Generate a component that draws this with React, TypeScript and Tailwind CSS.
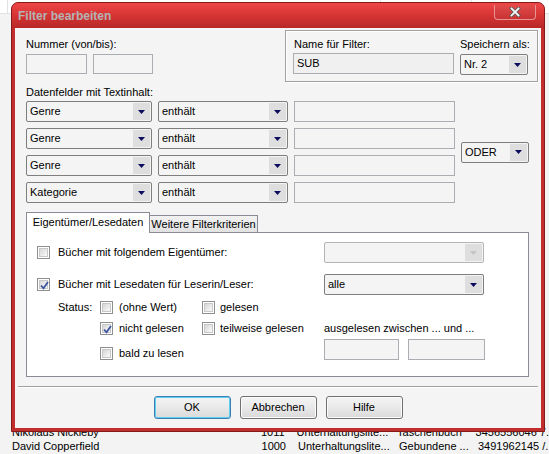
import React from "react";

const font = { fontFamily: '"Liberation Sans", Arial, sans-serif' };

function Arrow({ disabled = false }: { disabled?: boolean }) {
  return (
    <svg width="7" height="4" viewBox="0 0 7 4">
      <polygon points="0,0 7,0 3.5,4" fill={disabled ? "#c4c4c4" : "#0c0c5e"} />
    </svg>
  );
}

function Select({ value, w, disabled = false }: { value: string; w: string; disabled?: boolean }) {
  return (
    <div
      className={`${w} h-[21px] flex items-center rounded-[2px] border ${
        disabled ? "border-[#b4b4b4] bg-[#f4f4f4]" : "border-[#7e7e7e] bg-[#f4f4f4]"
      } pl-[3px] pr-[1px]`}
    >
      <span className="flex-1 truncate leading-[13px]">{value}</span>
      <div className="w-[17px] h-[17px] flex items-center justify-center bg-[#dedede]">
        <Arrow disabled={disabled} />
      </div>
    </div>
  );
}

function Input({ w, value = "", h = "h-[20px]", bg = "bg-[#f4f4f4]" }: { w: string; value?: string; h?: string; bg?: string }) {
  return (
    <div className={`${w} ${h} ${bg} border border-[#abadb3] flex items-center pl-[3px] leading-[13px]`}>
      {value}
    </div>
  );
}

function Checkbox({ checked = false }: { checked?: boolean }) {
  return (
    <div className="w-[13px] h-[13px] shrink-0 border border-[#8e8f8f] bg-white p-[1px]">
      <div className="w-full h-full bg-gradient-to-br from-[#d6d6d6] to-[#fafafa] border border-[#c8c8c8] relative">
        {checked && (
          <svg className="absolute left-[-1px] top-[-1px]" width="11" height="11" viewBox="0 0 11 11">
            <path d="M2 5.5 L4.5 8.3 L9 2" fill="none" stroke="#3d55a0" strokeWidth="1.8" />
          </svg>
        )}
      </div>
    </div>
  );
}

function Check({ label, checked = false, gap = "gap-[6px]" }: { label: string; checked?: boolean; gap?: string }) {
  return (
    <div className={`flex items-center ${gap}`}>
      <Checkbox checked={checked} />
      <span className="leading-[13px]">{label}</span>
    </div>
  );
}

function Button({ label, focused = false }: { label: string; focused?: boolean }) {
  return (
    <div
      className={`h-[23px] w-[77px] rounded-[3px] border flex items-center justify-center leading-[13px] bg-gradient-to-b from-[#f4f4f4] via-[#e9e9e9] to-[#d9d9d9] ${
        focused ? "border-[#3c7fb1] shadow-[inset_0_0_0_1px_#5fd0f4]" : "border-[#707070] shadow-[inset_0_0_0_1px_#fbfbfb]"
      }`}
    >
      {label}
    </div>
  );
}

function Background() {
  return (
    <div className="absolute inset-0 flex flex-col bg-[#f3f3f3] text-[11px] text-black" style={font}>
      <div className="h-[14px] bg-white border-b border-[#e2e2e2] flex">
        <div className="w-[8px] border-r border-[#e2e2e2]" />
        <div className="w-[373px] border-r border-[#e2e2e2]" />
        <div className="w-[91px] border-r border-[#e2e2e2]" />
      </div>
      <div className="flex-1" />
      <div className="flex flex-col pb-[1px]">
        {[
          ["Nikolaus Nickleby", "1011", "Unterhaltungslite...", "Taschenbuch", "3456556046 7."],
          ["David Copperfield", "1000", "Unterhaltungslite...", "Gebundene ...", "3491962145 /."],
        ].map((r) => (
          <div key={r[0]} className="h-[14px] flex items-center whitespace-nowrap">
            <span className="pl-[12px] w-[250px]">{r[0]}</span>
            <span className="w-[36px] text-right">{r[1]}</span>
            <span className="pl-[12px] w-[113px]">{r[2]}</span>
            <span className="w-[79px]">{r[3]}</span>
            <span>{r[4]}</span>
          </div>
        ))}
      </div>
    </div>
  );
}

export default function App() {
  return (
    <div className="relative w-[549px] h-[454px] overflow-hidden text-[11px] text-black" style={font}>
      <Background />

      {/* dialog window */}
      <div className="absolute left-[11px] top-[2px] w-[534px] h-[430px] flex flex-col rounded-t-[7px] border border-[#861a1a] bg-[#c22e2e]">
        <div className="h-[25px] shrink-0 flex items-start rounded-t-[6px] bg-gradient-to-b from-[#ee4646] via-[#d63434] to-[#b82727] pl-[6px]">
          <span className="mt-[6px] text-[12px] font-bold text-[#b4b4b4] leading-[14px]">Filter bearbeiten</span>
          <div className="ml-auto mr-[8px] mt-[2px] w-[42px] h-[15px] rounded-b-[4px] border border-t-0 border-[#e89494] bg-gradient-to-b from-[#e24a4a] to-[#c93232] flex items-center justify-center">
            <svg width="12" height="10" viewBox="0 0 12 10">
              <path d="M2.5 1.5 L9.5 8.5 M9.5 1.5 L2.5 8.5" stroke="#5a5a5a" strokeWidth="3.4" strokeLinecap="square" />
              <path d="M2.5 1.5 L9.5 8.5 M9.5 1.5 L2.5 8.5" stroke="#f4f4f4" strokeWidth="1.8" strokeLinecap="square" />
            </svg>
          </div>
        </div>

        {/* client */}
        <div className="flex-1 mx-[3px] mb-[3px] bg-[#f4f4f4] flex flex-col">
          <div className="flex">
            <div className="pl-[11px] pt-[10px] flex flex-col">
              <span className="leading-[13px]">Nummer (von/bis):</span>
              <div className="flex gap-[6px] mt-[3px]">
                <Input w="w-[61px]" />
                <Input w="w-[60px]" />
              </div>
            </div>
            <div className="ml-auto mr-[3px] mt-[2px] w-[253px] h-[52px] border border-[#a0a0a0] shadow-[inset_1px_1px_0_#ffffff,1px_1px_0_#ffffff] flex gap-[6px] pl-[7px] pt-[7px]">
              <div className="flex flex-col">
                <span className="leading-[13px] pl-[1px]">Name für Filter:</span>
                <div className="mt-[2px]">
                  <Input w="w-[161px]" h="h-[21px]" bg="bg-[#f0f0f0]" value="SUB" />
                </div>
              </div>
              <div className="flex flex-col">
                <span className="leading-[13px]">Speichern als:</span>
                <div className="mt-[3px]">
                  <Select w="w-[68px]" value="Nr. 2" />
                </div>
              </div>
            </div>
          </div>

          <span className="mt-[4px] pl-[11px] leading-[13px]">Datenfelder mit Textinhalt:</span>

          <div className="mt-[2px] pl-[11px] flex items-center">
            <div className="flex flex-col gap-[6px]">
              {["Genre", "Genre", "Genre", "Kategorie"].map((f, i) => (
                <div key={i} className="flex gap-[6px]">
                  <Select w="w-[126px]" value={f} />
                  <Select w="w-[130px]" value="enthält" />
                  <Input w="w-[161px]" h="h-[21px]" />
                </div>
              ))}
            </div>
            <div className="ml-[6px]">
              <Select w="w-[68px]" value="ODER" />
            </div>
          </div>

          {/* tabs */}
          <div className="mt-[9px] pl-[11px] flex items-end">
            <div className="relative z-10 w-[124px] h-[21px] -mb-[1px] bg-white border border-b-0 border-[#898c95] flex items-center justify-center pb-[1px] leading-[13px]">
              Eigentümer/Lesedaten
            </div>
            <div className="w-[109px] h-[17px] -ml-[1px] border border-b-0 border-[#898c95] bg-gradient-to-b from-[#f2f2f2] to-[#e2e2e2] flex items-center justify-center leading-[13px]">
              Weitere Filterkriterien
            </div>
          </div>
          <div className="ml-[11px] w-[503px] h-[145px] bg-white border border-[#898c95] flex flex-col">
            <div className="mt-[9px] pl-[10px] flex items-center">
              <div className="w-[287px]">
                <Check label="Bücher mit folgendem Eigentümer:" gap="gap-[8px]" />
              </div>
              <Select w="w-[160px]" value="" disabled />
            </div>
            <div className="mt-[11px] pl-[10px] flex items-center">
              <div className="w-[287px]">
                <Check label="Bücher mit Lesedaten für Leserin/Leser:" checked gap="gap-[8px]" />
              </div>
              <Select w="w-[160px]" value="alle" />
            </div>

            <div className="mt-[2px] pl-[31px] h-[21px] flex items-center">
              <span className="w-[42px] leading-[13px]">Status:</span>
              <div className="w-[102px]">
                <Check label="(ohne Wert)" />
              </div>
              <Check label="gelesen" gap="gap-[5px]" />
            </div>
            <div className="pl-[31px] h-[21px] flex items-center">
              <span className="w-[42px]" />
              <div className="w-[102px]">
                <Check label="nicht gelesen" checked />
              </div>
              <div className="w-[122px]">
                <Check label="teilweise gelesen" gap="gap-[5px]" />
              </div>
              <span className="leading-[13px]">ausgelesen zwischen ... und ...</span>
            </div>
            <div className="pl-[31px] flex items-start">
              <span className="w-[42px]" />
              <div className="w-[224px] mt-[8px]">
                <Check label="bald zu lesen" />
              </div>
              <div className="flex gap-[9px]">
                <Input w="w-[75px]" h="h-[21px]" />
                <Input w="w-[77px]" h="h-[21px]" />
              </div>
            </div>
          </div>

          <div className="mt-[9px] mx-[3px] h-[2px] border-t border-[#a0a0a0] border-b border-b-white" />

          <div className="mt-[8px] flex justify-center gap-[9px]">
            <Button label="OK" focused />
            <Button label="Abbrechen" />
            <Button label="Hilfe" />
          </div>
        </div>
      </div>
    </div>
  );
}
